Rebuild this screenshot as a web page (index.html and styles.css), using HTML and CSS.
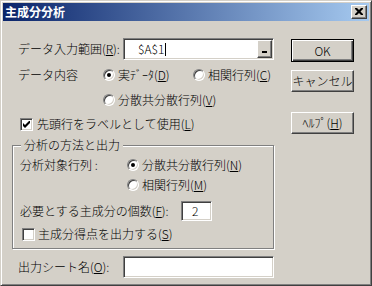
FILE: index.html
```html
<!DOCTYPE html>
<html lang="ja">
  <head>
    <meta charset="UTF-8" />
    <meta name="viewport" content="width=device-width, initial-scale=1.0" />
    <title>主成分分析</title>
    <link rel="stylesheet" href="styles.css">
  </head>
  <body>
    <div class="window">
      <div class="titlebar">
        <span class="title">主成分分析</span>
        <span class="close-btn">
          <svg width="8" height="7" viewBox="0 0 8 7">
            <path d="M0 0h2l2 2l2 -2h2v1l-2.5 2.5l2.5 2.5v1h-2l-2 -2l-2 2h-2v-1l2.5 -2.5l-2.5 -2.5z" fill="#000" />
          </svg>
        </span>
      </div>

      <div class="client">
        <div class="form">
          <div class="row row-range">
            <span class="label label-wide">データ入力範囲(<u>R</u>):</span>
            <div class="field field-range">
              <span class="field-text">$A$1<span class="caret"></span></span>
              <span class="ref-btn"><span class="ref-dash"></span></span>
            </div>
          </div>

          <div class="row row-content">
            <span class="label label-content">データ内容</span>
            <span class="option option-first"><span class="radio checked"></span>実ﾃﾞｰﾀ(<u>D</u>)</span>
            <span class="option"><span class="radio"></span>相関行列(<u>C</u>)</span>
          </div>

          <div class="row row-cov">
            <span class="option"><span class="radio"></span>分散共分散行列(<u>V</u>)</span>
          </div>

          <div class="row row-header">
            <span class="check">
              <svg width="7" height="7" viewBox="0 0 7 7">
                <path d="M0 2v3l2 2l5 -5v-3l-5 5z" fill="#000" />
              </svg>
            </span>
            先頭行をラベルとして使用(<u>L</u>)
          </div>

          <fieldset class="group">
            <legend>分析の方法と出力</legend>

            <div class="group-row row-target">
              <span class="label label-target">分析対象行列 :</span>
              <span class="option"><span class="radio checked"></span>分散共分散行列(<u>N</u>)</span>
            </div>

            <div class="group-row row-corr">
              <span class="option"><span class="radio"></span>相関行列(<u>M</u>)</span>
            </div>

            <div class="group-row row-count">
              <span class="label label-count">必要とする主成分の個数(<u>F</u>):</span>
              <div class="field field-count">2</div>
            </div>

            <div class="group-row row-score">
              <span class="check"></span>
              主成分得点を出力する(<u>S</u>)
            </div>
          </fieldset>

          <div class="row row-output">
            <span class="label label-wide">出力シート名(<u>O</u>):</span>
            <div class="field field-output"></div>
          </div>
        </div>

        <div class="actions">
          <button class="btn btn-default">OK</button>
          <button class="btn btn-cancel">キャンセル</button>
          <button class="btn btn-help">ﾍﾙﾌﾟ(<u>H</u>)</button>
        </div>
      </div>
    </div>
  </body>
</html>
```

FILE: styles.css
```css
* {
  box-sizing: border-box;
}
body {
  margin: 0;
  padding: 0;
  font-family: "Noto Sans CJK JP", "Liberation Sans", sans-serif;
  font-size: 12px;
  font-weight: 300;
  line-height: 14px;
  color: #000;
  background-color: #d4d0c8;
}
u {
  text-decoration-thickness: 1px;
  text-underline-offset: 1px;
}

/* window frame */
.window {
  width: 372px;
  height: 286px;
  background-color: #d4d0c8;
  border: 1px solid;
  border-color: #d4d0c8 #404040 #404040 #d4d0c8;
  box-shadow: inset 1px 1px #fff, inset -1px -1px #808080;
  padding: 2px;
}
.titlebar {
  height: 18px;
  display: flex;
  align-items: center;
  padding: 0 2px 0 2px;
  background: linear-gradient(to right, #0a246a, #a6caf0);
}
.title {
  color: #fff;
  font-weight: bold;
}
.close-btn {
  margin-left: auto;
  width: 16px;
  height: 14px;
  display: flex;
  align-items: center;
  justify-content: center;
  background-color: #d4d0c8;
  border: 1px solid;
  border-color: #fff #404040 #404040 #fff;
  box-shadow: inset -1px -1px #808080;
}
.close-btn svg {
  display: block;
  margin: 0 1px 1px 0;
}

/* client area */
.client {
  display: flex;
  padding: 17px 0 0 9px;
}
.form {
  width: 262px;
  display: flex;
  flex-direction: column;
}
.row {
  display: flex;
  align-items: center;
  height: 20px;
  padding-left: 6px;
  white-space: nowrap;
}
.label {
  flex: none;
}
.label-wide {
  width: 105px;
}
.label-content {
  width: 85px;
}
.row-range {
  height: 22px;
}
.row-content {
  margin-top: 5px;
}
.row-cov {
  margin-top: 5px;
  padding-left: 91px;
}
.row-header {
  margin-top: 4px;
  padding-left: 8px;
}
.row-output {
  height: 22px;
  margin-top: 7px;
}

/* radios and checkboxes */
.option {
  display: flex;
  align-items: center;
}
.option-first {
  width: 90px;
}
.radio {
  flex: none;
  width: 12px;
  height: 12px;
  margin-right: 3px;
  border-radius: 50%;
  background-color: #fff;
  border: 1px solid;
  border-color: #808080 #fff #fff #808080;
  box-shadow: inset 1px 1px #404040, inset -1px -1px #d4d0c8;
  display: flex;
  align-items: center;
  justify-content: center;
}
.radio.checked::after {
  content: "";
  width: 4px;
  height: 4px;
  border-radius: 50%;
  background-color: #000;
}
.check {
  flex: none;
  width: 13px;
  height: 13px;
  margin-right: 4px;
  background-color: #fff;
  border: 1px solid;
  border-color: #808080 #fff #fff #808080;
  box-shadow: inset 1px 1px #404040, inset -1px -1px #d4d0c8;
  display: flex;
  align-items: center;
  justify-content: center;
}

/* sunken fields */
.field {
  background-color: #fff;
  border: 1px solid;
  border-color: #808080 #fff #fff #808080;
  box-shadow: inset 1px 1px #404040, inset -1px -1px #d4d0c8;
  padding: 1px;
}
.field-range,
.field-output {
  flex: 0 0 151px;
  height: 22px;
  display: flex;
  align-items: center;
}
.field-text {
  flex: 1;
  display: flex;
  align-items: center;
  padding-left: 13px;
}
.caret {
  width: 1px;
  height: 13px;
  margin-left: 1px;
  background-color: #000;
}
.ref-btn {
  flex: none;
  width: 15px;
  height: 18px;
  display: flex;
  align-items: flex-end;
  justify-content: center;
  padding-bottom: 4px;
  background-color: #d4d0c8;
  border: 1px solid;
  border-color: #fff #404040 #404040 #fff;
  box-shadow: inset -1px -1px #808080;
}
.ref-dash {
  width: 5px;
  height: 2px;
  background-color: #000;
}
.field-count {
  width: 31px;
  height: 20px;
  padding-left: 10px;
  display: flex;
  align-items: center;
}

/* group box */
.group {
  margin: 4px 0 0 0;
  padding: 0 0 4px 0;
  min-width: 0;
  border: 1px solid #808080;
  box-shadow: inset 1px 1px #fff, 1px 1px #fff;
}
.group legend {
  margin-left: 8px;
  padding: 0 3px;
  line-height: 14px;
  background-color: #d4d0c8;
}
.group-row {
  display: flex;
  align-items: center;
  height: 20px;
  padding-left: 7px;
  white-space: nowrap;
}
.label-target {
  width: 107px;
}
.label-count {
  width: 161px;
}
.row-target {
  margin-top: 3px;
}
.row-corr {
  padding-left: 114px;
}
.row-count {
  height: 22px;
  margin-top: 5px;
}
.row-score {
  margin-top: 2px;
  padding-left: 9px;
}
.row-score .check {
  margin-right: 3px;
}

/* buttons */
.actions {
  display: flex;
  flex-direction: column;
  margin-left: 17px;
  padding-top: 1px;
}
.btn {
  width: 63px;
  height: 22px;
  padding: 0;
  font-family: inherit;
  font-size: 12px;
  font-weight: 300;
  line-height: 14px;
  color: #000;
  background-color: #d4d0c8;
  border: 1px solid;
  border-color: #fff #404040 #404040 #fff;
  box-shadow: inset -1px -1px #808080;
}
.btn-default {
  height: 23px;
  border-color: #000;
  box-shadow: inset 1px 1px #fff, inset -1px -1px #404040, inset -2px -2px #808080;
}
.btn-cancel {
  margin-top: 8px;
}
.btn-help {
  margin-top: 20px;
}
```
